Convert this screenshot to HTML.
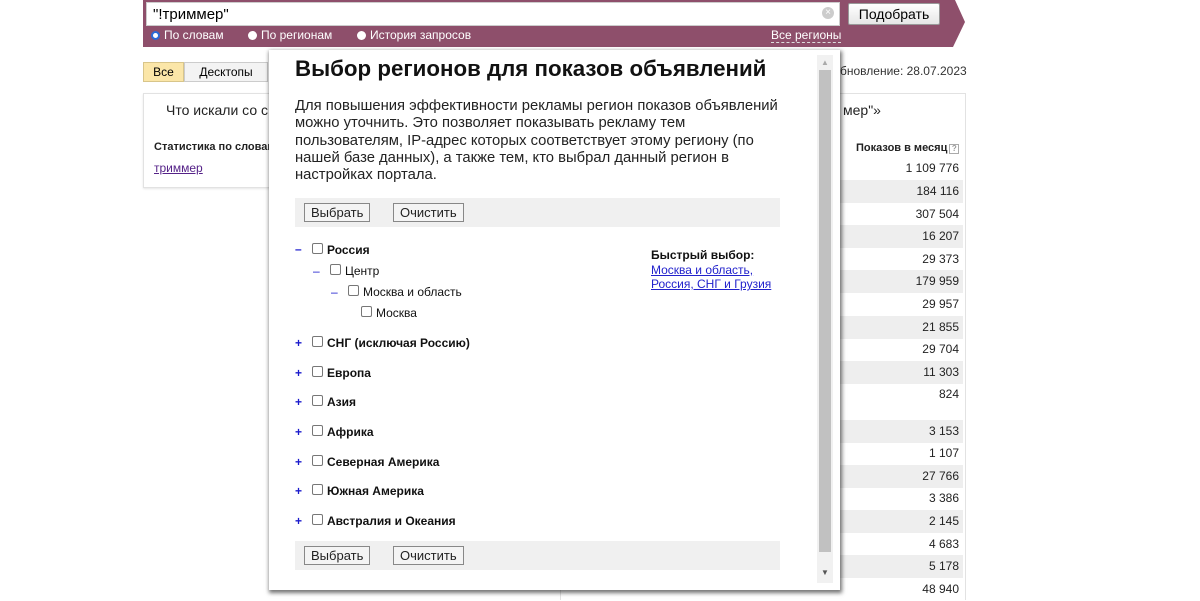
<!DOCTYPE html>
<html><head><meta charset="utf-8"><style>
*{box-sizing:border-box;margin:0;padding:0}
body{width:1200px;height:600px;overflow:hidden;background:#fff;font-family:"Liberation Sans",Arial,sans-serif;position:relative;color:#000}
.abs{position:absolute}
.bar{left:143px;top:0;width:822px;height:47px}
.inp{left:146px;top:2px;width:694px;height:24px;background:#fff;border:1px solid #ccc;font-size:15px;padding:3px 6px}
.btn{border:1px solid #999;background:linear-gradient(#fff,#e6e6e6);font-size:13px;text-align:center;border-radius:2px}
.radio{font-size:12px;color:#fff;top:28px}
.dot{display:inline-block;width:9px;height:9px;border-radius:50%;background:#fff;vertical-align:-1px;margin-right:4px}
.row{right:237px;width:280px;height:22.5px;font-size:12px;text-align:right;padding:4px 4px 0 0;color:#222}
.g{background:#eee}
.modal{left:269px;top:50px;width:571px;height:540px;background:#fff;box-shadow:1px 2px 4px 1px rgba(0,0,0,.55)}
.tb{left:26px;width:485px;height:29px;background:#f0f0f0}
.b2{position:absolute;top:5px;height:19px;font-size:13px;border:1px solid #888;background:#f4f4f4;padding:1px 6px;color:#222}
.it{font-size:12px;font-weight:bold;color:#111}
.cb{display:inline-block;width:11px;height:11px;border:1px solid #777;border-radius:2px;background:#fff;margin-right:4px;vertical-align:0}
.pm{color:#1a1acc;font-weight:bold;font-size:12px;position:absolute}
</style></head><body>
<svg class="abs bar" width="822" height="47"><polygon points="0,0 812,0 822,22 810,47 0,47" fill="#8e4f6b"/></svg>
<div class="abs inp">"!триммер"</div>
<div class="abs" style="left:822px;top:7px;width:12px;height:12px;border-radius:50%;background:#ccc;color:#fff;font-size:10px;line-height:12px;text-align:center">×</div>
<div class="abs btn" style="left:848px;top:3px;width:92px;height:22px;font-size:14px;line-height:20px">Подобрать</div>
<div class="abs radio" style="left:151px"><span class="dot" style="border:2px solid #2a6ad8"></span>По словам</div>
<div class="abs radio" style="left:248px"><span class="dot"></span>По регионам</div>
<div class="abs radio" style="left:357px"><span class="dot"></span>История запросов</div>
<div class="abs" style="left:771px;top:28px;font-size:12px;color:#fff;border-bottom:1px dashed #ddd">Все регионы</div>

<div class="abs" style="left:143px;top:62px;width:41px;height:20px;background:#fbe6a8;border:1px solid #d8c58a;font-size:12px;text-align:center;line-height:18px">Все</div>
<div class="abs" style="left:184px;top:62px;width:84px;height:20px;background:#f3f3f3;border:1px solid #ccc;font-size:12px;text-align:center;line-height:18px">Десктопы</div>
<div class="abs" style="left:840px;top:64px;font-size:12px;color:#333">бновление: 28.07.2023</div>

<div class="abs" style="left:143px;top:93px;width:127px;height:95px;border:1px solid #e2e2e2;border-right:none;box-shadow:0 1px 2px rgba(0,0,0,.1)"></div>
<div class="abs" style="left:166px;top:102px;font-size:14px;color:#222">Что искали со с</div>
<div class="abs" style="left:154px;top:141px;font-size:11px;font-weight:bold;color:#222">Статистика по словам</div>
<div class="abs" style="left:154px;top:161px;font-size:12px;color:#552288;text-decoration:underline">триммер</div>
<div class="abs" style="left:560px;top:93px;width:406px;height:507px;border:1px solid #e2e2e2;border-bottom:none"></div>
<div class="abs" style="left:843px;top:102px;font-size:14px;color:#222">мер"»</div>
<div class="abs" style="left:856px;top:142px;font-size:11px;font-weight:bold;color:#222">Показов в месяц<span style="display:inline-block;width:10px;height:10px;border:1px solid #aaa;margin-left:2px;font-size:8px;color:#999;line-height:8px;text-align:center">?</span></div>
<div class="abs row" style="top:157px">1 109 776</div>
<div class="abs row g" style="top:180px">184 116</div>
<div class="abs row" style="top:203px">307 504</div>
<div class="abs row g" style="top:225px">16 207</div>
<div class="abs row" style="top:248px">29 373</div>
<div class="abs row g" style="top:270px">179 959</div>
<div class="abs row" style="top:293px">29 957</div>
<div class="abs row g" style="top:316px">21 855</div>
<div class="abs row" style="top:338px">29 704</div>
<div class="abs row g" style="top:361px">11 303</div>
<div class="abs row" style="top:383px;height:36px">824</div>
<div class="abs row g" style="top:420px">3 153</div>
<div class="abs row" style="top:442px">1 107</div>
<div class="abs row g" style="top:465px">27 766</div>
<div class="abs row" style="top:487px">3 386</div>
<div class="abs row g" style="top:510px">2 145</div>
<div class="abs row" style="top:533px">4 683</div>
<div class="abs row g" style="top:555px">5 178</div>
<div class="abs row" style="top:578px">48 940</div>

<div class="abs modal">
<div class="abs" style="left:26px;top:6px;font-size:22.3px;font-weight:bold;color:#111">Выбор регионов для показов объявлений</div>
<div class="abs" style="left:26px;top:48px;width:492px;font-size:14.8px;line-height:17.3px;color:#222">Для повышения эффективности рекламы регион показов объявлений можно уточнить. Это позволяет показывать рекламу тем пользователям, IP-адрес которых соответствует этому региону (по нашей базе данных), а также тем, кто выбрал данный регион в настройках портала.</div>
<div class="abs tb" style="top:148px"><span class="b2" style="left:9px">Выбрать</span><span class="b2" style="left:98px">Очистить</span></div>
<span class="pm" style="left:26px;top:192px">–</span><div class="abs it" style="left:43px;top:193px"><span class="cb"></span>Россия</div>
<span class="pm" style="left:44px;top:214px;font-weight:normal">–</span><div class="abs it" style="left:61px;top:214px;font-weight:normal"><span class="cb"></span>Центр</div>
<span class="pm" style="left:62px;top:235px;font-weight:normal">–</span><div class="abs it" style="left:79px;top:235px;font-weight:normal"><span class="cb"></span>Москва и область</div>
<div class="abs it" style="left:92px;top:256px;font-weight:normal"><span class="cb"></span>Москва</div>
<div class="abs" style="left:382px;top:198px;font-size:12px;font-weight:bold;color:#111">Быстрый выбор:</div>
<div class="abs" style="left:382px;top:213px;font-size:12px;line-height:14px;color:#2222cc;text-decoration:underline">Москва и область,<br>Россия, СНГ и Грузия</div>
<span class="pm" style="left:26px;top:286px">+</span><div class="abs it" style="left:43px;top:286px"><span class="cb"></span>СНГ (исключая Россию)</div>
<span class="pm" style="left:26px;top:316px">+</span><div class="abs it" style="left:43px;top:316px"><span class="cb"></span>Европа</div>
<span class="pm" style="left:26px;top:345px">+</span><div class="abs it" style="left:43px;top:345px"><span class="cb"></span>Азия</div>
<span class="pm" style="left:26px;top:375px">+</span><div class="abs it" style="left:43px;top:375px"><span class="cb"></span>Африка</div>
<span class="pm" style="left:26px;top:405px">+</span><div class="abs it" style="left:43px;top:405px"><span class="cb"></span>Северная Америка</div>
<span class="pm" style="left:26px;top:434px">+</span><div class="abs it" style="left:43px;top:434px"><span class="cb"></span>Южная Америка</div>
<span class="pm" style="left:26px;top:464px">+</span><div class="abs it" style="left:43px;top:464px"><span class="cb"></span>Австралия и Океания</div>
<div class="abs tb" style="top:491px"><span class="b2" style="left:9px">Выбрать</span><span class="b2" style="left:98px">Очистить</span></div>
<div class="abs" style="left:548px;top:5px;width:16px;height:528px;background:#f1f1f1"></div>
<div class="abs" style="left:550px;top:20px;width:12px;height:482px;background:#c1c1c1"></div>
<div class="abs" style="left:552px;top:8px;font-size:8px;color:#aaa">▲</div>
<div class="abs" style="left:552px;top:518px;font-size:8px;color:#555">▼</div>
</div>
</body></html>
